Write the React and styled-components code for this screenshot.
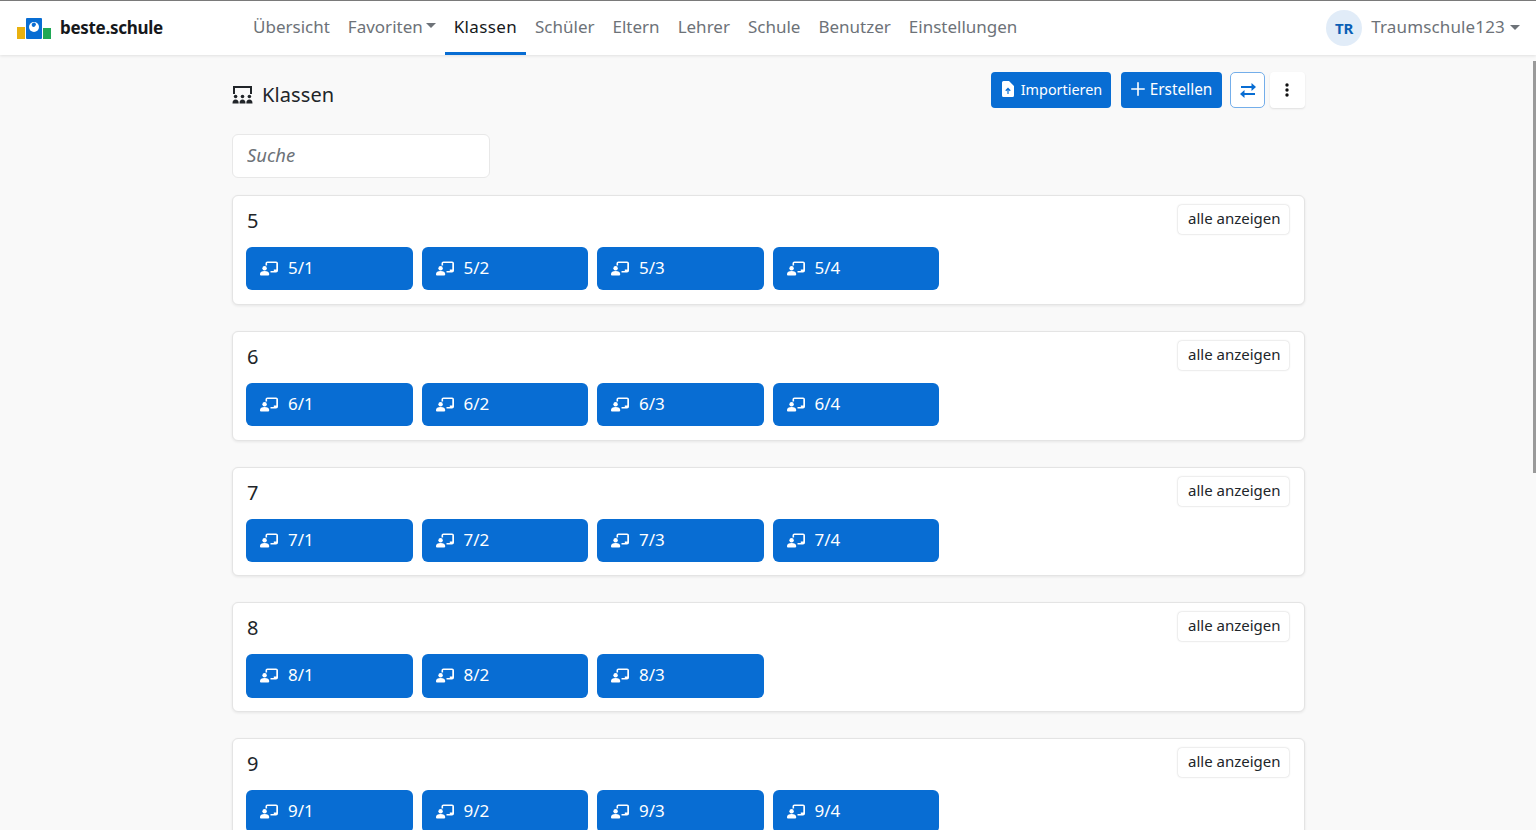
import React from "react";
import styled, { createGlobalStyle } from "styled-components";

const GlobalStyle = createGlobalStyle`
  html, body {
    margin: 0;
    height: 100%;
    overflow: hidden;
    background: #f9f9f9;
    font-family: "Noto Sans", "Open Sans", sans-serif;
    color: #212529;
  }
`;

const navItems = ["Übersicht", "Favoriten", "Klassen", "Schüler", "Eltern", "Lehrer", "Schule", "Benutzer", "Einstellungen"];

const grades = [
  { name: "5", classes: ["5/1", "5/2", "5/3", "5/4"] },
  { name: "6", classes: ["6/1", "6/2", "6/3", "6/4"] },
  { name: "7", classes: ["7/1", "7/2", "7/3", "7/4"] },
  { name: "8", classes: ["8/1", "8/2", "8/3"] },
  { name: "9", classes: ["9/1", "9/2", "9/3", "9/4"] },
];

function Logo() {
  return (
    <svg width="36" height="21" viewBox="0 0 36 21">
      <rect x="1" y="9" width="8" height="12" fill="#e9b10f" />
      <rect x="10" y="0" width="16" height="21" rx="1" fill="#086dd3" />
      <circle cx="18" cy="9" r="5" fill="#fff" />
      <path d="M18 9a2.200 2.200 0 1 1 2-2.600c-.4 1-1 2-2 2.600z" fill="#086dd3" />
      <rect x="27" y="10" width="8" height="11" fill="#1fa855" />
    </svg>
  );
}

function ClassIcon() {
  return (
    <svg width="18" height="15" viewBox="0 0 18 15" fill="#fff">
      <path d="M5.500 2.500C5.500 1.300 6.300.5 7.500.5H16c1.200 0 2 .8 2 2v7c0 1.200-.8 2-2 2h-5.500V9.900h3.300V8.500h2.500V2.100H7.100v2.400H5.500z" />
      <circle cx="4.600" cy="7.200" r="2.200" />
      <path d="M0 13c0-2 1.800-3 4.600-3s4.600 1 4.600 3v.6c0 .5-.4.9-.9.9H.9c-.5 0-.9-.4-.9-.9z" />
    </svg>
  );
}

function HeadingIcon() {
  return (
    <svg width="21" height="18" viewBox="0 0 21 18" fill="#212529">
      <path d="M1 0h19v8h-2V2H3v6H1z" />
      <circle cx="3.600" cy="10.500" r="1.800" />
      <circle cx="10.500" cy="10.500" r="1.800" />
      <circle cx="17.400" cy="10.500" r="1.800" />
      <path d="M.5 17.500c0-3 1.200-4 3.100-4s3.100 1 3.100 4zM7.500 17.500c0-3 1.200-4 3-4s3 1 3 4zM14.300 17.500c0-3 1.200-4 3.100-4s3.100 1 3.100 4z" />
    </svg>
  );
}

function FileUpIcon() {
  return (
    <svg width="12" height="16" viewBox="0 0 12 16" fill="#fff">
      <path fillRule="evenodd" d="M1.500 0H7l5 5v9.500a1.500 1.500 0 0 1-1.500 1.500h-9A1.500 1.500 0 0 1 0 14.500v-13A1.500 1.500 0 0 1 1.500 0zM6 6.500 3.300 9.300l.9.900 1.200-1.200V13h1.200V9l1.200 1.200.9-.9z" />
    </svg>
  );
}

function PlusIcon() {
  return (
    <svg width="14" height="14" viewBox="0 0 14 14" stroke="#fff" strokeWidth="1.600" strokeLinecap="round">
      <path d="M7 .8v12.400M.8 7h12.400" />
    </svg>
  );
}

function SwapIcon() {
  return (
    <svg width="16" height="15" viewBox="0 0 16 15" fill="#086dd3">
      <path d="M11.500 0 16 4l-4.500 4V5H1V3h10.500z" />
      <path d="M4.500 7 0 11l4.500 4v-3H15v-2H4.500z" />
    </svg>
  );
}

function DotsIcon() {
  return (
    <svg width="4" height="14" viewBox="0 0 4 14" fill="#111">
      <circle cx="2" cy="2" r="1.700" />
      <circle cx="2" cy="7" r="1.700" />
      <circle cx="2" cy="12" r="1.700" />
    </svg>
  );
}

export default function App() {
  return (
    <>
      <GlobalStyle />
      <Navbar>
        <Brand>
          <Logo />
          <BrandName>beste.schule</BrandName>
        </Brand>
        <NavList>
          {navItems.map((item) => (
            <NavItem key={item} $active={item === "Klassen"}>
              {item}
              {item === "Favoriten" && <Caret />}
            </NavItem>
          ))}
        </NavList>
        <UserMenu>
          <Avatar>TR</Avatar>
          <UserName>Traumschule123</UserName>
          <Caret />
        </UserMenu>
      </Navbar>
      <Main>
        <Header>
          <Title>
            <HeadingIcon />
            <h1>Klassen</h1>
          </Title>
          <Actions>
            <PrimaryButton $width={120} $gap={7} $size={14.4} $left={2}>
              <FileUpIcon />
              Importieren
            </PrimaryButton>
            <PrimaryButton $width={101} $gap={5} $size={15.4} $left={0}>
              <PlusIcon />
              Erstellen
            </PrimaryButton>
            <SwapButton>
              <SwapIcon />
            </SwapButton>
            <DotsButton>
              <DotsIcon />
            </DotsButton>
          </Actions>
        </Header>
        <SearchInput placeholder="Suche" />
        {grades.map((grade) => (
          <GradeCard key={grade.name}>
            <GradeHeader>
              <GradeName>{grade.name}</GradeName>
              <ShowAll>alle anzeigen</ShowAll>
            </GradeHeader>
            <ClassGrid>
              {grade.classes.map((name) => (
                <ClassButton key={name}>
                  <ClassIcon />
                  {name}
                </ClassButton>
              ))}
            </ClassGrid>
          </GradeCard>
        ))}
      </Main>
      <ScrollThumb />
    </>
  );
}

const Navbar = styled.nav`
  box-sizing: border-box;
  height: 55px;
  display: flex;
  align-items: center;
  padding: 0 16px;
  background: #fff;
  border-top: 1px solid #7a7a7a;
  box-shadow: 0 1px 3px rgba(0, 0, 0, 0.1);
`;

const Brand = styled.div`
  width: 228px;
  display: flex;
  align-items: center;
  gap: 8px;
`;

const BrandName = styled.span`
  padding-bottom: 2px;
  font-size: 17px;
  font-weight: 700;
  letter-spacing: -0.3px;
  color: #16181b;
`;

const NavList = styled.div`
  height: 100%;
  display: flex;
`;

const NavItem = styled.div`
  box-sizing: border-box;
  height: 54px;
  display: flex;
  align-items: center;
  gap: 3px;
  padding: 0 9px 1px;
  font-size: 17px;
  letter-spacing: ${(p) => (p.$active ? "0.35px" : "0")};
  color: ${(p) => (p.$active ? "#16181b" : "#6d7278")};
  border-bottom: 3px solid ${(p) => (p.$active ? "#086dd3" : "transparent")};
`;

const Caret = styled.span`
  width: 0;
  height: 0;
  margin-bottom: 2px;
  border-left: 5px solid transparent;
  border-right: 5px solid transparent;
  border-top: 5px solid #6d7278;
`;

const UserMenu = styled.div`
  margin-left: auto;
  display: flex;
  align-items: center;
  color: #6d7278;
`;

const Avatar = styled.div`
  width: 36px;
  height: 36px;
  border-radius: 50%;
  background: #e1ecf8;
  color: #0a5fb5;
  font-size: 15px;
  font-weight: 700;
  padding-bottom: 1px;
  box-sizing: border-box;
  display: flex;
  align-items: center;
  justify-content: center;
`;

const UserName = styled.span`
  margin: 0 5px 4px 9px;
  font-size: 17px;
  letter-spacing: 0.15px;
`;

const Main = styled.main`
  width: 1073px;
  margin-left: 232px;
`;

const Header = styled.div`
  height: 79px;
  display: flex;
  justify-content: space-between;
  align-items: flex-start;
  padding-top: 17px;
  box-sizing: border-box;
`;

const Title = styled.div`
  display: flex;
  align-items: center;
  gap: 9px;
  height: 46px;
  h1 {
    margin: 0 0 1px;
    font-size: 20px;
    font-weight: 400;
    letter-spacing: 0.1px;
  }
`;

const Actions = styled.div`
  display: flex;
  gap: 10px;
`;

const PrimaryButton = styled.button`
  box-sizing: border-box;
  width: ${(p) => p.$width}px;
  height: 36px;
  padding: 0 0 2px ${(p) => p.$left}px;
  border: none;
  border-radius: 4px;
  background: #086dd3;
  color: #fff;
  font: 400 ${(p) => p.$size}px "Noto Sans", sans-serif;
  display: flex;
  align-items: center;
  justify-content: center;
  gap: ${(p) => p.$gap}px;
`;

const SwapButton = styled.button`
  width: 35px;
  height: 36px;
  margin-left: -2px;
  padding: 0;
  background: #fff;
  border: 1px solid #74aeea;
  border-radius: 5px;
  display: flex;
  align-items: center;
  justify-content: center;
`;

const DotsButton = styled.button`
  width: 35px;
  height: 36px;
  margin-left: -5px;
  padding: 0 1px 0 0;
  background: #fff;
  border: none;
  border-radius: 4px;
  box-shadow: 0 1px 2px rgba(0, 0, 0, 0.1);
  display: flex;
  align-items: center;
  justify-content: center;
`;

const SearchInput = styled.input`
  display: block;
  box-sizing: border-box;
  width: 258px;
  height: 44px;
  margin-bottom: 17px;
  padding: 0 14px 3px;
  background: #fff;
  border: 1px solid #e8e8e8;
  border-radius: 6px;
  font: italic 400 18.4px "Noto Sans", sans-serif;
  &::placeholder {
    color: #6d7278;
    opacity: 1;
  }
`;

const GradeCard = styled.section`
  box-sizing: border-box;
  height: 109.75px;
  margin-bottom: 26px;
  padding: 8px 14px 8px 13px;
  background: #fff;
  border: 1px solid #e4e4e4;
  border-radius: 6px;
  box-shadow: 0 1px 3px rgba(0, 0, 0, 0.08);
`;

const GradeHeader = styled.div`
  height: 43px;
  display: flex;
  justify-content: space-between;
  align-items: flex-start;
`;

const GradeName = styled.div`
  margin: 2px 0 0 1px;
  font-size: 20px;
  line-height: 30px;
`;

const ShowAll = styled.button`
  width: 111px;
  height: 29px;
  margin: 1px 1px 0 0;
  padding: 0 10px 3px;
  white-space: nowrap;
  background: #fff;
  border: none;
  border-radius: 4px;
  box-shadow: 0 0 2px rgba(0, 0, 0, 0.25);
  color: #212529;
  font: 400 15px "Noto Sans", sans-serif;
`;

const ClassGrid = styled.div`
  display: flex;
  gap: 8.75px;
`;

const ClassButton = styled.button`
  box-sizing: border-box;
  width: 166.75px;
  height: 43.25px;
  padding: 0 14px 2px;
  border: none;
  border-radius: 6px;
  background: #086dd3;
  color: #fff;
  font: 400 17px "Noto Sans", sans-serif;
  display: flex;
  align-items: center;
  gap: 10px;
  svg {
    margin-top: 2px;
  }
`;

const ScrollThumb = styled.div`
  position: fixed;
  top: 61px;
  right: 0;
  width: 3px;
  height: 412px;
  background: #9a9a9a;
`;
